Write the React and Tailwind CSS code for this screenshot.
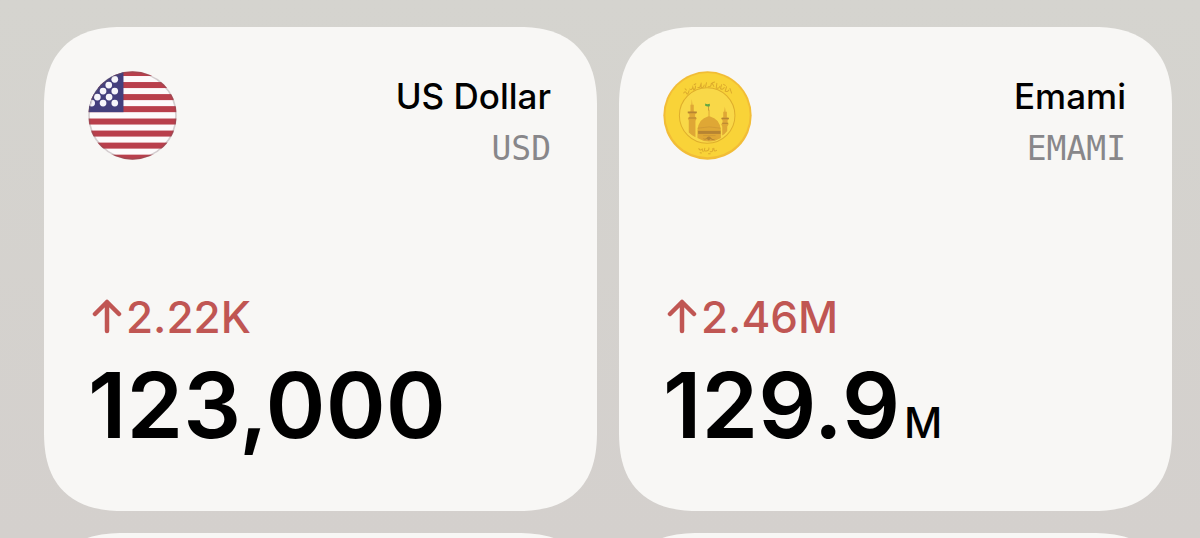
import React from 'react';

const rates = [
  { id: 'usd', name: 'US Dollar', code: 'USD', change: '2.22K', value: '123,000', icon: UsFlag },
  { id: 'emami', name: 'Emami', code: 'EMAMI', change: '2.46M', value: '129.9', unit: 'M', icon: EmamiCoin },
];

const stripes = [32, 68, 104, 140, 177, 213, 249, 285];
const stars = [
  [106, 60], [88, 77], [71, 95], [106, 95], [54, 113], [89, 113], [37, 131], [71, 131], [106, 131],
];

function UsFlag() {
  return (
    <svg viewBox="26 35 266 266" className="size-[89px] shrink-0" role="img" aria-label="US flag">
      <defs>
        <clipPath id="flag-clip">
          <circle cx="159" cy="168" r="132" />
        </clipPath>
      </defs>
      <g clipPath="url(#flag-clip)">
        <rect x="26" y="35" width="266" height="266" fill="#fdfafb" />
        {stripes.map((y) => (
          <rect key={y} x="26" y={y} width="266" height="18" fill="#b93f4c" />
        ))}
        <rect x="26" y="35" width="106" height="123" fill="#443f7d" />
        {stars.map(([x, y]) => (
          <circle key={`${x}-${y}`} cx={x} cy={y} r="10" fill="#f6f5fb" />
        ))}
      </g>
      <circle cx="159" cy="168" r="130" fill="none" stroke="#6b5a5e" strokeOpacity="0.28" strokeWidth="5" />
    </svg>
  );
}

function EmamiCoin() {
  return (
    <svg viewBox="26 35 266 266" className="size-[89px] shrink-0" role="img" aria-label="Emami coin">
      <circle cx="159" cy="168" r="132" fill="#f2bd36" />
      <circle cx="159" cy="167" r="126" fill="#f9d338" />
      <circle cx="158" cy="168" r="83" fill="#f9d848" stroke="#dfae2c" strokeWidth="3" />
      {/* inscriptions round the rim */}
      <g fill="none" stroke="#dcaa2c" strokeWidth="3" strokeLinecap="round">
        <path d="M88 101q4-8 8 0t8-7M92 88l4 4M106 89q7 4 9-6l3 9q6-2 5-12M119 76l5-3M130 84q8 3 8-8M140 71v13q8 2 9-7M156 70l-3 13M161 82q8 2 9-7t8 6M174 70l6-2M187 72l-2 14q8 3 11-5M201 76l-3 12q8 4 11-4M207 75l5 3M216 82l-4 13q7 4 11-3M226 87l5 14" />
        <path d="M133 267q5 8 10 1l3 8M151 266q-4 10 5 8t7-9M167 276q9 2 8-9M178 266q0 12 8 6" />
        <path d="M137 279l4 1M162 282h5" />
      </g>
      <g fill="#dfa735">
        <path d="M112 119l2 17h4v20l8 3-4 6v7l5 4-4 8v49q-11-5-20-14v-36l-3-7 5-4v-7l-5-6 8-3v-20h3z" />
        <path d="M211 142l2 15h4v16l6 3-4 7v6l3 5-4 7v13q-8 10-15 14v-27l-3-7 4-5v-6l-4-7 6-3v-16h3z" />
        <path d="M162 151h3v19q32 8 34 42v23q-35 22-70 0v-23q2-34 33-42z" />
      </g>
      <g fill="#b68432">
        <path d="M100 156h27v5h-27zM103 174h22v3h-22zM201 175h22v4h-22zM203 190h18v3h-18z" />
        <path d="M131 214h67v9h-67z" />
        <path d="M145 235q8 6 13-2 6-5 12 2 7 7 14 0-7 10-16 3l-5 5-6-5q-8 5-12-3z" />
      </g>
      <path d="M129 206q35-8 70 0M146 228h37" fill="none" stroke="#cb9434" strokeWidth="2" />
      <path d="M162 134v19" stroke="#b68432" strokeWidth="2" />
      <path d="M152 132q6 4 14 1v7q-7 3-14-1z" fill="#62a744" />
    </svg>
  );
}

function ArrowUp() {
  return (
    <svg
      viewBox="0 0 38 36"
      className="h-9 w-[38px]"
      fill="none"
      stroke="currentColor"
      strokeWidth="4.5"
      strokeLinecap="round"
      strokeLinejoin="round"
      role="img"
      aria-label="Up"
    >
      <path d="M19 32V3M7 15L19 3l12 12" />
    </svg>
  );
}

function RateCard({ rate }) {
  const Icon = rate.icon;

  return (
    <article className="flex h-[484px] flex-col justify-between rounded-[80px] bg-[#f8f7f5] pt-11 pr-[46px] pb-12 pl-11 [corner-shape:superellipse(1.3)]">
      <header className="flex items-start justify-between">
        <Icon />
        <div className="text-right">
          <h2 className="text-[35px] leading-[50px] font-medium text-black">{rate.name}</h2>
          <p className="font-['DejaVu_Sans_Mono',monospace] text-[33px] leading-[56px] text-[#88878a]">{rate.code}</p>
        </div>
      </header>

      <div>
        <p className="flex items-center text-[44px] leading-[60px] font-medium text-[#c05653]">
          <ArrowUp />
          <span>{rate.change}</span>
        </p>
        <p className="text-[91px] leading-[116px] font-semibold text-black">
          {rate.value}
          {rate.unit && <span className="ml-1 text-[42px] leading-none font-medium">{rate.unit}</span>}
        </p>
      </div>
    </article>
  );
}

export default function App() {
  return (
    <main className="h-screen overflow-hidden bg-linear-to-b from-[#d5d4cf] to-[#d4d0cd] pt-[27px] pr-7 pl-11 font-['Inter',sans-serif]">
      <div className="grid grid-cols-2 gap-[22px]">
        {rates.map((rate) => (
          <RateCard key={rate.id} rate={rate} />
        ))}
        <div className="h-[484px] rounded-[80px] bg-[#f8f7f5] [corner-shape:superellipse(1.3)]"></div>
        <div className="h-[484px] rounded-[80px] bg-[#f8f7f5] [corner-shape:superellipse(1.3)]"></div>
      </div>
    </main>
  );
}
